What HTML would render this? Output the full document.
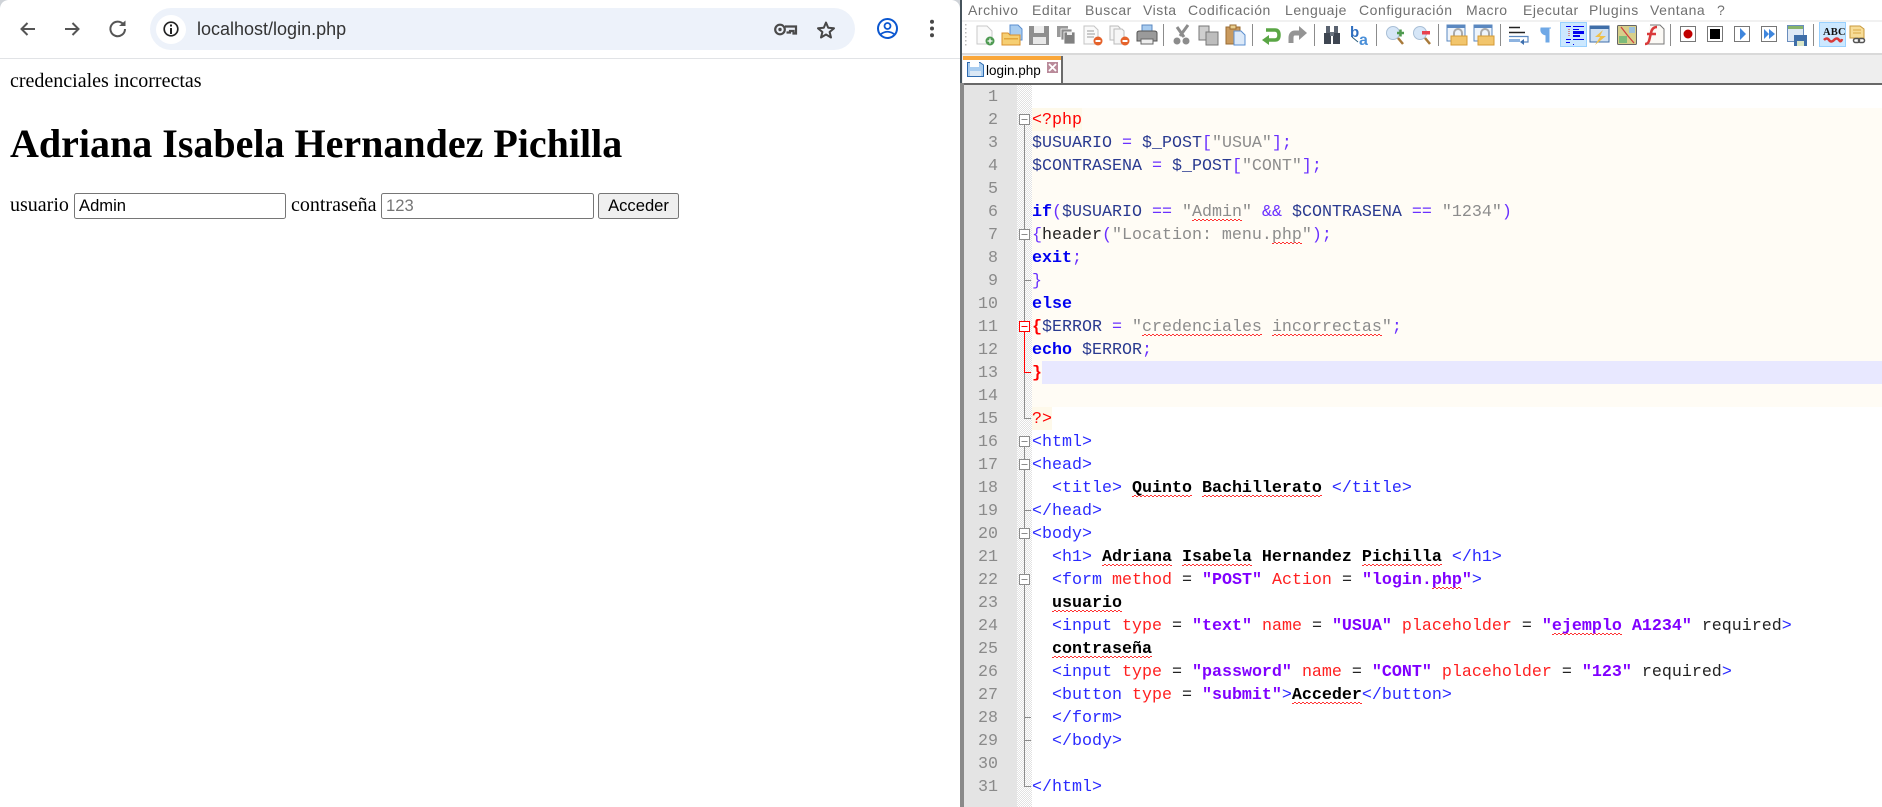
<!DOCTYPE html>
<html lang="es"><head><meta charset="utf-8"><title>login.php</title>
<style>
html,body{margin:0;padding:0;background:#fff;width:1882px;height:807px;overflow:hidden}
.a{position:absolute;white-space:pre}
#top{position:absolute;left:0;top:0;width:960px;height:58px;background:#fff;border-bottom:1px solid #e1e3e6}
#omni{position:absolute;left:150px;top:8px;width:705px;height:42px;border-radius:21px;background:#edf2fa}
#info{position:absolute;left:156px;top:15px;width:30px;height:29px;border-radius:50%;background:#fff}
.serif{font-family:"Liberation Serif",serif;font-size:20px;color:#000;line-height:24px}
.box{position:absolute;box-sizing:border-box;height:26px;top:193px;border:1px solid #767676;border-radius:2.5px;background:#fff;font:16.6px/23px "Liberation Sans",sans-serif;padding-left:4px;white-space:pre}
.m{position:absolute;top:0;font:14px/20px "Liberation Sans",sans-serif;letter-spacing:.55px;color:#707070;white-space:pre}
#ln div{position:absolute;left:964px;width:34px;text-align:right;height:23px;margin-top:1px;font:16.67px/23px "Liberation Mono",monospace;color:#8a8a8a}
#code div{position:absolute;left:1032px;height:23px;margin-top:1px;font:16.67px/23px "Liberation Mono",monospace;white-space:pre;color:#000}
b{font-weight:bold}
.w{background:repeating-conic-gradient(#f33 0 25%,transparent 0 50%) 0 16px/4px 2px repeat-x}
.v{color:#2a3a90}.o{color:#6a30ff}.s{color:#8c8c8c}.k{color:#0000f0;font-weight:bold}.t{color:#2a2aff}.r{color:#ff2020}.p{color:#8000ff;font-weight:bold}.x{color:#f00}.f{color:#222}
</style></head><body>

<div style="position:absolute;left:0;top:0;width:960px;height:807px;background:#fff"></div>
<div id="top"></div>
<div id="omni"></div><div id="info"></div>
<svg class="a" style="left:0;top:0" width="960" height="58" viewBox="0 0 960 58">
<path d="M0 8Q1 1 8 0H0Z" fill="#cfd3d8"/><path d="M960 8Q959 1 952 0H960Z" fill="#cfd3d8"/>
<g fill="none" stroke="#555" stroke-width="2">
<path d="M35 29H21.500M27.500 23L21.500 29L27.500 35"/>
<path d="M65 29H78.500M72.500 23L78.500 29L72.500 35"/>
<path d="M123.500 24.500A7.300 7.300 0 1 0 125 29"/>
</g>
<path d="M119 26H125.500V20.500Z" fill="#555"/>
<circle cx="171" cy="29" r="6.800" fill="none" stroke="#222" stroke-width="1.700"/>
<rect x="170" y="28" width="2" height="6" fill="#222"/><rect x="170" y="24.500" width="2" height="2" fill="#222"/>
<g fill="none" stroke="#4a4a4a" stroke-width="2.200"><circle cx="780" cy="29.500" r="4.800"/><path d="M785 26.500H796V33.500H793.500V31H790V32.500H786.500"/></g>
<circle cx="780" cy="29.500" r="1.700" fill="#4a4a4a"/>
<path d="M826 22.500L828.200 27.800L834 28.300L829.600 32L831 37.500L826 34.500L821 37.500L822.400 32L818 28.300L823.800 27.800Z" fill="none" stroke="#474747" stroke-width="2" stroke-linejoin="round"/>
<circle cx="887.500" cy="28.500" r="9.500" fill="none" stroke="#0b57d0" stroke-width="2"/>
<circle cx="887.500" cy="26" r="3" fill="none" stroke="#0b57d0" stroke-width="1.800"/>
<path d="M881 34Q887.500 29.500 894 34" fill="none" stroke="#0b57d0" stroke-width="1.800"/>
<g fill="#474747"><circle cx="932" cy="21.700" r="2"/><circle cx="932" cy="28.500" r="2"/><circle cx="932" cy="35.200" r="2"/></g>
</svg>
<div class="a" style="left:197px;top:18px;font:18px/22px 'Liberation Sans',sans-serif;color:#333">localhost/login.php</div>

<div class="a serif" style="left:10px;top:69px">credenciales incorrectas</div>
<div class="a" style="left:10px;top:122px;font:bold 40px/44px 'Liberation Serif',serif;color:#000">Adriana Isabela Hernandez Pichilla</div>
<div class="a serif" style="left:10px;top:193px">usuario</div>
<div class="box" style="left:74px;width:212px;color:#000">Admin</div>
<div class="a serif" style="left:291px;top:193px">contraseña</div>
<div class="box" style="left:381px;width:213px;color:#757575">123</div>
<div class="box" style="left:598px;width:81px;background:#efefef;text-align:center;padding:0;border-color:#767676;color:#000">Acceder</div>

<!-- Notepad++ -->
<div style="position:absolute;left:960px;top:0;width:922px;height:807px;background:#fff"></div>
<div style="position:absolute;left:960px;top:0;width:2px;height:807px;background:#46535c"></div>
<div style="position:absolute;left:962px;top:20px;width:920px;height:2px;background:#f1f1f1"></div>
<div style="position:absolute;left:962px;top:53px;width:920px;height:2px;background:#d9d9d9"></div>
<div style="position:absolute;left:962px;top:55px;width:920px;height:28px;background:#eeeeee"></div>
<div style="position:absolute;left:963px;top:56px;width:98px;height:27px;background:#fff;border-right:2px solid #6a6a6a"></div>
<div style="position:absolute;left:963px;top:56px;width:98px;height:4px;background:#faa73a"></div>
<div style="position:absolute;left:962px;top:83px;width:920px;height:2px;background:#686868"></div>
<div style="position:absolute;left:960px;top:83px;width:4px;height:724px;background:#8a8a8a"></div>
<div style="position:absolute;left:964px;top:85px;width:53px;height:722px;background:#e4e4e4"></div>
<div style="position:absolute;left:1017px;top:85px;width:15px;height:722px;background-color:#f1f1f1;background-image:repeating-conic-gradient(#e2e2e2 0 25%,#fff 0 50%);background-size:2px 2px"></div>

<span class="m" style="left:968px">Archivo</span><span class="m" style="left:1032px">Editar</span><span class="m" style="left:1085px">Buscar</span><span class="m" style="left:1143px">Vista</span><span class="m" style="left:1188px">Codificación</span><span class="m" style="left:1285px">Lenguaje</span><span class="m" style="left:1359px">Configuración</span><span class="m" style="left:1466px">Macro</span><span class="m" style="left:1523px">Ejecutar</span><span class="m" style="left:1589px">Plugins</span><span class="m" style="left:1650px">Ventana</span><span class="m" style="left:1717px">?</span>

<svg class="a" style="left:960px;top:20px" width="922" height="36" viewBox="960 20 922 36">
<g fill="#bbb"><rect x="965" y="24" width="1.500" height="1.500"/><rect x="965" y="28" width="1.500" height="1.500"/><rect x="965" y="32" width="1.500" height="1.500"/><rect x="965" y="36" width="1.500" height="1.500"/><rect x="965" y="40" width="1.500" height="1.500"/><rect x="965" y="44" width="1.500" height="1.500"/></g>
<g fill="#8c8c8c"><rect x="1163" y="24" width="1" height="22"/><rect x="1252" y="24" width="1" height="22"/><rect x="1314" y="24" width="1" height="22"/><rect x="1376" y="24" width="1" height="22"/><rect x="1438" y="24" width="1" height="22"/><rect x="1500" y="24" width="1" height="22"/><rect x="1670" y="24" width="1" height="22"/><rect x="1813" y="24" width="1" height="22"/></g>
<!-- new -->
<path d="M977 26H987L992 31V44H977Z" fill="#fafafa" stroke="#c9c9c9"/><circle cx="990" cy="41" r="4.500" fill="#4e9a52"/><path d="M987.500 41H992.500M990 38.500V43.500" stroke="#fff" stroke-width="1.300"/>
<!-- open -->
<path d="M1010 25H1018L1022 29V40H1010Z" fill="#a9cdf0" stroke="#5b8fd0"/><path d="M1002 33H1008L1010 35H1020V45H1002Z" fill="#f6cf73" stroke="#d9902c"/><rect x="1004" y="38" width="14" height="1.500" fill="#e2a63b"/>
<!-- save -->
<path d="M1029 26H1049V45H1029Z" fill="#8f8f8f"/><rect x="1034" y="26" width="10" height="7" fill="#eee"/><rect x="1033" y="37" width="13" height="7" fill="#e8e8e8"/>
<!-- save all -->
<path d="M1057 26H1068V37H1057Z" fill="#9a9a9a"/><path d="M1061 29H1072V40H1061Z" fill="#8c8c8c" stroke="#fff" stroke-width=".8"/><path d="M1064 32H1075V44H1064Z" fill="#808080" stroke="#fff" stroke-width=".8"/><rect x="1067" y="32" width="5" height="3" fill="#eee"/>
<!-- close -->
<path d="M1084 26H1094L1098 30V44H1084Z" fill="#fafafa" stroke="#c4c4c4"/><path d="M1087 31H1094M1087 34H1095M1087 37H1094" stroke="#999"/><circle cx="1098" cy="41" r="4.500" fill="#e5622a"/><rect x="1095.500" y="40" width="5" height="2" fill="#fff"/>
<!-- close all -->
<path d="M1110 26H1118L1120 28V40H1110Z" fill="#f6f6f6" stroke="#bbb"/><path d="M1114 29H1122L1124 31V44H1114Z" fill="#f6f6f6" stroke="#bbb"/><circle cx="1125" cy="41" r="4.500" fill="#e5622a"/><rect x="1122.500" y="40" width="5" height="2" fill="#fff"/>
<!-- print -->
<rect x="1142" y="25" width="10" height="8" fill="#a8ccf0" stroke="#5b88c0"/><path d="M1137 33Q1137 31 1140 31H1154Q1157 31 1157 33V41H1137Z" fill="#9a9a9a" stroke="#555"/><rect x="1141" y="39" width="12" height="5" fill="#eee" stroke="#666"/>
<!-- cut -->
<path d="M1188 25L1180 36M1177 27L1184 37" stroke="#8c8c8c" stroke-width="3"/><circle cx="1177" cy="41" r="3.500" fill="#8c8c8c"/><circle cx="1186" cy="41" r="3.500" fill="#8c8c8c"/>
<!-- copy -->
<path d="M1199 26H1209V40H1199Z" fill="#cfcfcf" stroke="#777"/><path d="M1206 32H1218V45H1206Z" fill="#bdbdbd" stroke="#777"/>
<!-- paste -->
<rect x="1226" y="27" width="14" height="17" fill="#c99a5e" stroke="#9a6b30"/><rect x="1230" y="25" width="6" height="4" fill="#e9cf8f" stroke="#9a6b30"/><path d="M1234 31H1241L1245 35V45H1234Z" fill="#dce9f8" stroke="#5b8fd0"/>
<!-- undo / redo -->
<path d="M1266 30H1275Q1279 30 1279 35Q1279 40 1275 40H1266" fill="none" stroke="#5aa645" stroke-width="3.500"/><path d="M1262 40L1269 35V45Z" fill="#5aa645"/>
<path d="M1300 33H1295Q1291 33 1291 38V43" fill="none" stroke="#949494" stroke-width="5"/><path d="M1307 33L1299 26V40Z" fill="#949494"/>
<!-- find -->
<rect x="1324" y="33" width="7" height="11" fill="#3e4652"/><rect x="1333" y="33" width="7" height="11" fill="#3e4652"/><rect x="1326" y="26" width="4" height="7" fill="#5a6370"/><rect x="1334" y="26" width="4" height="7" fill="#5a6370"/><rect x="1330" y="32" width="4" height="4" fill="#6b7480"/>
<!-- replace -->
<text x="1350" y="37" font-family="Liberation Sans,sans-serif" font-size="15" font-weight="bold" fill="#2f6fc0">b</text><text x="1359" y="45" font-family="Liberation Sans,sans-serif" font-size="16" font-weight="bold" fill="#4a8fd8">a</text><path d="M1352 37L1358 42" stroke="#2d5f80"/>
<!-- zoom -->
<circle cx="1393" cy="33" r="6.500" fill="#d6e6f7" stroke="#a9bfd6"/><path d="M1398 38L1403 44" stroke="#a87a3a" stroke-width="2.500"/><path d="M1397 33H1404M1400.500 29.500V36.500" stroke="#4f9a4f" stroke-width="2.500"/>
<circle cx="1420" cy="33" r="6.500" fill="#d6e6f7" stroke="#a9bfd6"/><path d="M1425 38L1430 44" stroke="#a87a3a" stroke-width="2.500"/><rect x="1422" y="31" width="8" height="3.500" fill="#e8414f"/>
<!-- sync -->
<rect x="1447" y="25" width="18" height="16" fill="#eef4fb" stroke="#5b88c0"/><rect x="1447" y="25" width="18" height="3" fill="#5b88c0"/><path d="M1454 37V33A4 4 0 0 1 1462 33V37" fill="none" stroke="#aaa" stroke-width="2"/><rect x="1451" y="36" width="16" height="9" fill="#f2c56c" stroke="#d49a35"/>
<rect x="1474" y="25" width="18" height="16" fill="#eef4fb" stroke="#5b88c0"/><rect x="1474" y="25" width="18" height="3" fill="#5b88c0"/><path d="M1481 37V33A4 4 0 0 1 1489 33V37" fill="none" stroke="#aaa" stroke-width="2"/><rect x="1478" y="36" width="16" height="9" fill="#f2c56c" stroke="#d49a35"/>
<!-- wrap -->
<path d="M1509 27.500H1520M1509 32.500H1525" stroke="#222" stroke-width="1.500"/><path d="M1509 36.500H1528V42H1523" fill="none" stroke="#5b88c0" stroke-width="1.200"/><rect x="1509" y="39" width="11" height="3" fill="#8db3e0"/><path d="M1524 39V45L1520 42Z" fill="#3d6fae"/>
<!-- pilcrow -->
<path d="M1551 28H1541Q1540 34 1546 35V42H1549V28Z" fill="#6fa8e6" stroke="#6fa8e6" stroke-width="1"/>
<!-- indent guide -->
<rect x="1560.500" y="22.500" width="26" height="24" fill="#cce8ff" stroke="#99d1ff"/>
<g fill="#0000f0"><rect x="1566" y="26" width="5" height="1"/><rect x="1573" y="26" width="11" height="1"/><rect x="1573" y="29" width="6" height="1"/><rect x="1573" y="31" width="11" height="3"/><rect x="1573" y="35" width="7" height="2"/><rect x="1566" y="39" width="5" height="1"/><rect x="1573" y="39" width="11" height="1"/><rect x="1566" y="42" width="4" height="1"/><rect x="1573" y="44" width="1" height="1"/></g><path d="M1569 29V37" stroke="#d03030" stroke-dasharray="1 1"/>
<!-- doc map -->
<rect x="1590" y="26" width="19" height="16" fill="#cfe0f2" stroke="#3f6ea8"/><rect x="1590" y="26" width="19" height="3" fill="#3f6ea8"/><path d="M1603 30L1595 37H1600L1595 45L1606 36H1600Z" fill="#efc04a"/>
<!-- map -->
<rect x="1617.500" y="25.500" width="19" height="19" rx="1" fill="#d7cf8a" stroke="#666"/><rect x="1619" y="36" width="8" height="7" fill="#7dbb7a"/><rect x="1629" y="27" width="6" height="6" fill="#9cc0dd"/><path d="M1621 27L1628 36L1634 43" stroke="#d04040" stroke-width="1.300" fill="none"/>
<!-- func -->
<path d="M1650 25H1660L1664 29V44H1646" fill="#fbf9f5" stroke="#777"/><path d="M1657 27Q1652 27 1651 33L1649 41Q1648 44 1645 44M1647 34H1656" fill="none" stroke="#d93a3a" stroke-width="2.500"/>
<!-- macro -->
<rect x="1680.500" y="26.500" width="15" height="15" fill="#fff" stroke="#777"/><circle cx="1688" cy="34" r="4.500" fill="#c00000"/>
<rect x="1707.500" y="26.500" width="15" height="15" fill="#fff" stroke="#777"/><rect x="1710" y="29" width="10" height="10" fill="#000"/>
<rect x="1734.500" y="26.500" width="15" height="15" fill="#fff" stroke="#777"/><path d="M1740 28V40L1746 34Z" fill="#3f86dd"/>
<rect x="1761.500" y="26.500" width="15" height="15" fill="#fff" stroke="#777"/><path d="M1764 29V39L1769 34ZM1769 29V39L1775 34Z" fill="#3f86dd"/>
<rect x="1787.500" y="25.500" width="16" height="16" fill="#dfe9f5" stroke="#6a8dbd"/><rect x="1788" y="26" width="15" height="3" fill="#86b36b"/><path d="M1794 35H1807V46H1794Z" fill="#3f6ea8"/><rect x="1797" y="41" width="7" height="5" fill="#dbe6c7"/>
<!-- spell -->
<rect x="1819.500" y="22.500" width="26" height="24" fill="#cce8ff" stroke="#99d1ff"/>
<text x="1823" y="35" font-family="Liberation Serif,serif" font-weight="bold" font-size="10.500" fill="#111" style="letter-spacing:.2px">ABC</text>
<path d="M1824 40Q1827 37 1829 40T1834 40T1839 40T1842 39" fill="none" stroke="#d83a3a" stroke-width="2.500"/>
<!-- link -->
<path d="M1850 26H1860L1864 29V38H1850Z" fill="#f7dc97" stroke="#c89a3e"/><path d="M1853 30H1861M1853 33H1861" stroke="#d8a846"/><rect x="1853.500" y="38.500" width="6" height="4" rx="2" fill="none" stroke="#555" stroke-width="1.500"/><rect x="1858.500" y="38.500" width="6" height="4" rx="2" fill="none" stroke="#555" stroke-width="1.500"/>
</svg>

<!-- tab -->
<svg class="a" style="left:966px;top:60px" width="100" height="22" viewBox="966 60 100 22">
<path d="M967.500 62.500H980L983.500 65V76.500H967.500Z" fill="#a9cdf0" stroke="#2e6bb0"/><rect x="970" y="62" width="9" height="5" fill="#fff"/><rect x="970" y="71" width="11" height="5" fill="#dbe8f5"/>
<rect x="1047" y="62" width="11" height="11" fill="#b98a9a"/><path d="M1049 64L1056 71M1056 64L1049 71" stroke="#fff" stroke-width="1.800"/>
</svg>
<div class="a" style="left:986px;top:62px;font:13.5px/18px 'Liberation Sans',sans-serif;color:#000">login.php</div>

<!-- bands -->
<div style="position:absolute;left:1032px;top:108px;width:850px;height:299px;background:#fffcf5"></div>
<div style="position:absolute;left:1032px;top:108px;width:50px;height:23px;background:#fef9ea"></div>
<div style="position:absolute;left:1032px;top:407px;width:20px;height:23px;background:#fef9ea"></div>
<div style="position:absolute;left:1042px;top:361px;width:840px;height:23px;background:#e8e8ff"></div>

<!-- fold margin -->
<svg class="a" style="left:1010px;top:100px" width="24" height="707" viewBox="1010 100 24 707">
<g fill="none" stroke="#8c8c8c">
<path d="M1024.500 124V321M1024.500 373V418.500H1031M1024.500 446V786.500H1031"/>
<path d="M1025 280.500H1031M1025 510.500H1031M1025 717.500H1031M1025 740.500H1031"/>
<g fill="#fff">
<rect x="1019.500" y="114.500" width="10" height="10"/><rect x="1019.500" y="229.500" width="10" height="10"/>
<rect x="1019.500" y="436.500" width="10" height="10"/><rect x="1019.500" y="459.500" width="10" height="10"/><rect x="1019.500" y="528.500" width="10" height="10"/><rect x="1019.500" y="574.500" width="10" height="10"/>
</g>
<path d="M1021.500 119.500H1027.500M1021.500 234.500H1027.500M1021.500 441.500H1027.500M1021.500 464.500H1027.500M1021.500 533.500H1027.500M1021.500 579.500H1027.500"/>
</g>
<g fill="none" stroke="#ff0000"><path d="M1024.500 331V372.500H1031"/><rect x="1019.500" y="321.500" width="10" height="10" fill="#fff"/><path d="M1021.500 326.500H1027.500"/></g>
</svg>

<div id="ln">
<div style="top:85px">1</div><div style="top:108px">2</div><div style="top:131px">3</div><div style="top:154px">4</div><div style="top:177px">5</div><div style="top:200px">6</div><div style="top:223px">7</div><div style="top:246px">8</div><div style="top:269px">9</div><div style="top:292px">10</div><div style="top:315px">11</div><div style="top:338px">12</div><div style="top:361px">13</div><div style="top:384px">14</div><div style="top:407px">15</div><div style="top:430px">16</div><div style="top:453px">17</div><div style="top:476px">18</div><div style="top:499px">19</div><div style="top:522px">20</div><div style="top:545px">21</div><div style="top:568px">22</div><div style="top:591px">23</div><div style="top:614px">24</div><div style="top:637px">25</div><div style="top:660px">26</div><div style="top:683px">27</div><div style="top:706px">28</div><div style="top:729px">29</div><div style="top:752px">30</div><div style="top:775px">31</div>
</div>

<div id="code">
<div style="top:108px"><span class="x">&lt;?php</span></div>
<div style="top:131px"><span class="v">$USUARIO</span> <span class="o">=</span> <span class="v">$_POST</span><span class="o">[</span><span class="s">"USUA"</span><span class="o">];</span></div>
<div style="top:154px"><span class="v">$CONTRASENA</span> <span class="o">=</span> <span class="v">$_POST</span><span class="o">[</span><span class="s">"CONT"</span><span class="o">];</span></div>
<div style="top:200px"><span class="k">if</span><span class="o">(</span><span class="v">$USUARIO</span> <span class="o">==</span> <span class="s">"<span class="w">Admin</span>"</span> <span class="o">&amp;&amp;</span> <span class="v">$CONTRASENA</span> <span class="o">==</span> <span class="s">"1234"</span><span class="o">)</span></div>
<div style="top:223px"><span class="o">{</span><span class="f">header</span><span class="o">(</span><span class="s">"Location: menu.<span class="w">php</span>"</span><span class="o">);</span></div>
<div style="top:246px"><span class="k">exit</span><span class="o">;</span></div>
<div style="top:269px"><span class="o">}</span></div>
<div style="top:292px"><span class="k">else</span></div>
<div style="top:315px"><b class="x">{</b><span class="v">$ERROR</span> <span class="o">=</span> <span class="s">"<span class="w">credenciales</span> <span class="w">incorrectas</span>"</span><span class="o">;</span></div>
<div style="top:338px"><span class="k">echo</span> <span class="v">$ERROR</span><span class="o">;</span></div>
<div style="top:361px"><b class="x">}</b></div>
<div style="top:407px"><span class="x">?&gt;</span></div>
<div style="top:430px"><span class="t">&lt;html&gt;</span></div>
<div style="top:453px"><span class="t">&lt;head&gt;</span></div>
<div style="top:476px">  <span class="t">&lt;title&gt;</span> <b><span class="w">Quinto</span> <span class="w">Bachillerato</span></b> <span class="t">&lt;/title&gt;</span></div>
<div style="top:499px"><span class="t">&lt;/head&gt;</span></div>
<div style="top:522px"><span class="t">&lt;body&gt;</span></div>
<div style="top:545px">  <span class="t">&lt;h1&gt;</span> <b><span class="w">Adriana</span> <span class="w">Isabela</span> Hernandez <span class="w">Pichilla</span></b> <span class="t">&lt;/h1&gt;</span></div>
<div style="top:568px">  <span class="t">&lt;form</span> <span class="r">method</span> <span class="f">=</span> <span class="p">"POST"</span> <span class="r">Action</span> <span class="f">=</span> <span class="p">"login.<span class="w">php</span>"</span><span class="t">&gt;</span></div>
<div style="top:591px">  <b class="w">usuario</b></div>
<div style="top:614px">  <span class="t">&lt;input</span> <span class="r">type</span> <span class="f">=</span> <span class="p">"text"</span> <span class="r">name</span> <span class="f">=</span> <span class="p">"USUA"</span> <span class="r">placeholder</span> <span class="f">=</span> <span class="p">"<span class="w">ejemplo</span> A1234"</span> <span class="f">required</span><span class="t">&gt;</span></div>
<div style="top:637px">  <b class="w">contraseña</b></div>
<div style="top:660px">  <span class="t">&lt;input</span> <span class="r">type</span> <span class="f">=</span> <span class="p">"password"</span> <span class="r">name</span> <span class="f">=</span> <span class="p">"CONT"</span> <span class="r">placeholder</span> <span class="f">=</span> <span class="p">"123"</span> <span class="f">required</span><span class="t">&gt;</span></div>
<div style="top:683px">  <span class="t">&lt;button</span> <span class="r">type</span> <span class="f">=</span> <span class="p">"submit"</span><span class="t">&gt;</span><b class="w">Acceder</b><span class="t">&lt;/button&gt;</span></div>
<div style="top:706px">  <span class="t">&lt;/form&gt;</span></div>
<div style="top:729px">  <span class="t">&lt;/body&gt;</span></div>
<div style="top:775px"><span class="t">&lt;/html&gt;</span></div>
</div>
</body></html>
